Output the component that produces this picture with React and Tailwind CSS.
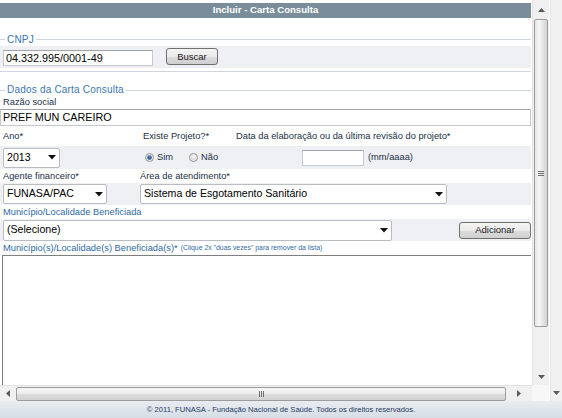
import React from 'react';

const labelCls = "text-[9.3px] leading-[14px] text-[#1c2f45] whitespace-nowrap";
const blueLabel = "text-[9.3px] leading-[14px] text-[#2f6aa6] whitespace-nowrap";

const Caret = () => (
  <svg width="8" height="5" viewBox="0 0 8 5">
    <polygon points="0,0 8,0 4,4.5" fill="#111" />
  </svg>
);

const Arrow = ({ dir }) => {
  const pts = {
    up: "0,4 7,4 3.5,0",
    down: "0,0 7,0 3.5,4",
    left: "4,0 4,7 0,3.5",
    right: "0,0 0,7 4,3.5",
  }[dir];
  const vertical = dir === 'up' || dir === 'down';
  return (
    <svg width={vertical ? 7 : 4} height={vertical ? 4 : 7} viewBox={vertical ? "0 0 7 4" : "0 0 4 7"}>
      <polygon points={pts} fill="#5a5a5a" />
    </svg>
  );
};

const Select = ({ value, className }) => (
  <div className={`flex items-center justify-between border border-[#b9bcc1] rounded-[2px] bg-white pl-[3px] pr-[3px] text-[10.6px] text-black ${className}`}>
    <span className="whitespace-nowrap">{value}</span>
    <Caret />
  </div>
);

const Button = ({ children, className }) => (
  <button className={`border border-[#707070] rounded-[3px] bg-[linear-gradient(#f4f4f4_0%,#ebebeb_50%,#dddddd_50%,#cfcfcf_100%)] text-[9.5px] text-[#1a1a1a] leading-none ${className}`}>
    {children}
  </button>
);

const Legend = ({ children, className }) => (
  <div className={`flex items-center ${className}`}>
    <div className="w-[5px] h-px bg-[#cfd6de]" />
    <span className="px-[2px] text-[10px] leading-[10px] text-[#3b76b0] tracking-[0.2px]">{children}</span>
    <div className="flex-1 h-px bg-[#cfd6de]" />
  </div>
);

const Radio = ({ checked }) => (
  <svg width="9" height="9" viewBox="0 0 9 9">
    <defs>
      <radialGradient id={checked ? 'rc' : 'ru'} cx="50%" cy="40%" r="60%">
        <stop offset="0%" stopColor={checked ? '#5b8fcf' : '#ffffff'} />
        <stop offset="100%" stopColor={checked ? '#163c6e' : '#d6d6d6'} />
      </radialGradient>
    </defs>
    <circle cx="4.5" cy="4.5" r="4" fill="#f3f3f3" stroke="#8e8f8f" strokeWidth="1" />
    {checked ? (
      <circle cx="4.5" cy="4.5" r="2.3" fill="url(#rc)" />
    ) : (
      <circle cx="4.5" cy="4.5" r="2.8" fill="url(#ru)" />
    )}
  </svg>
);

const Content = () => (
  <div className="w-[531px] h-[385px] flex flex-col pt-[3px] overflow-hidden">
    <div className="h-[15px] bg-[#798e9a] text-white font-bold text-[9.6px] flex items-center justify-center">
      Incluir - Carta Consulta
    </div>

    <Legend className="mt-[16px] h-[11px]">CNPJ</Legend>
    <div className="mt-[1px] h-[22px] bg-[#eef0f4] flex items-center">
      <div className="ml-[3px] w-[150px] h-[16px] mt-[2px] bg-white border border-[#c5c9cf] border-t-[#a0a4aa] text-[10.8px] leading-[14px] pl-[2px] text-black">
        04.332.995/0001-49
      </div>
      <Button className="ml-[13px] w-[52px] h-[17px] -mt-[1px]">Buscar</Button>
    </div>
    <div className="mt-[3px] h-px bg-[#cfd6de]" />

    <Legend className="mt-[13px] h-[10px]">Dados da Carta Consulta</Legend>
    <div className={`${labelCls} h-[13px] leading-[13px] pl-[3px]`}>Razão social</div>
    <div className="mt-[1px] h-[17px] bg-white border border-[#c5c9cf] border-t-[#a0a4aa] text-[10.8px] leading-[15px] pl-[2px] text-black">
      PREF MUN CAREIRO
    </div>

    <div className="mt-[3px] h-[14px] flex">
      <div className={`${labelCls} w-[142px] pl-[3px]`}>Ano*</div>
      <div className={`${labelCls} w-[94px] pl-[1px]`}>Existe Projeto?*</div>
      <div className={labelCls}>Data da elaboração ou da última revisão do projeto*</div>
    </div>
    <div className="mt-[3px] h-[23px] bg-[#eef0f4] flex items-center">
      <div className="w-[142px] pl-[3px]">
        <Select value="2013" className="w-[57px] h-[20px]" />
      </div>
      <div className="w-[94px] pl-[3px] flex items-center text-[9.3px] text-[#1c2f45]">
        <Radio checked />
        <span className="ml-[3px]">Sim</span>
        <span className="ml-[16px]"><Radio /></span>
        <span className="ml-[3px]">Não</span>
      </div>
      <div className="ml-[66px] w-[62px] h-[16px] bg-white border border-[#c5c9cf] border-t-[#a0a4aa]" />
      <span className="ml-[4px] text-[9.3px] text-[#1c2f45]">(mm/aaaa)</span>
    </div>

    <div className="h-[14px] flex">
      <div className={`${labelCls} w-[140px] pl-[3px]`}>Agente financeiro*</div>
      <div className={labelCls}>Área de atendimento*</div>
    </div>
    <div className="h-[22px] bg-[#eef0f4] flex items-center">
      <div className="w-[140px] pl-[3px]">
        <Select value="FUNASA/PAC" className="w-[104px] h-[20px]" />
      </div>
      <Select value="Sistema de Esgotamento Sanitário" className="w-[307px] h-[20px]" />
    </div>

    <div className={`${blueLabel} h-[14px] pl-[3px]`}>Município/Localidade Beneficiada</div>
    <div className="h-[22px] bg-[#eef0f4] flex items-center">
      <div className="pl-[3px]">
        <Select value="(Selecione)" className="w-[389px] h-[21px]" />
      </div>
      <Button className="ml-auto w-[72px] h-[17px]">Adicionar</Button>
    </div>

    <div className="h-[14px] flex items-center pl-[3px]">
      <span className={blueLabel}>Município(s)/Localidade(s) Beneficiada(s)*</span>
      <span className="ml-[3px] text-[6.9px] text-[#2f6aa6] whitespace-nowrap">(Clique 2x "duas vezes" para remover da lista)</span>
    </div>
    <div className="ml-[2px] flex-1 bg-white border-t border-l border-[#7f7f7f]" />
  </div>
);

const VScroll = () => (
  <div className="w-[17px] bg-[#f0f0f0] border-l border-[#e2e2e2] flex flex-col items-center">
    <div className="h-[19px] flex items-center justify-center">
      <Arrow dir="up" />
    </div>
    <div className="w-[14px] h-[308px] rounded-[2px] border border-[#9c9c9c] bg-[linear-gradient(to_right,#e6e6e6,#f7f7f7_35%,#e2e2e2_70%,#d4d4d4)] flex flex-col items-center justify-center gap-[1px]">
      <div className="w-[6px] h-px bg-[#707070]" />
      <div className="w-[6px] h-px bg-[#707070]" />
      <div className="w-[6px] h-px bg-[#707070]" />
    </div>
    <div className="flex-1" />
    <div className="h-[17px] flex items-center justify-center">
      <Arrow dir="down" />
    </div>
  </div>
);

const HScroll = () => (
  <div className="w-[532px] h-[16px] bg-[#f0f0f0] border-t border-[#e2e2e2] flex items-center">
    <div className="w-[16px] flex items-center justify-center">
      <Arrow dir="left" />
    </div>
    <div className="w-[490px] h-[14px] rounded-[2px] border border-[#9c9c9c] bg-[linear-gradient(#f6f6f6,#ececec_45%,#dcdcdc_55%,#d2d2d2)] flex items-center justify-center gap-[1px]">
      <div className="w-px h-[6px] bg-[#707070]" />
      <div className="w-px h-[6px] bg-[#707070]" />
      <div className="w-px h-[6px] bg-[#707070]" />
    </div>
    <div className="flex-1 flex items-center justify-center">
      <Arrow dir="right" />
    </div>
  </div>
);

export default function App() {
  return (
    <div className="w-[562px] h-[418px] bg-white flex flex-col overflow-hidden font-['Liberation_Sans',Arial,sans-serif]">
      <div className="flex h-[401px]">
        <div className="w-[549px] flex flex-col">
          <div className="flex h-[385px]">
            <Content />
            <div className="w-px" />
            <VScroll />
          </div>
          <div className="flex h-[16px]">
            <HScroll />
            <div className="w-[17px] bg-[#f7f7f7]" />
          </div>
        </div>
        <div className="w-px bg-white" />
        <div className="w-[12px] bg-[#f0f0f0] border-l border-[#e6e6e6] flex flex-col items-center justify-end pb-[6px]">
          <Arrow dir="down" />
        </div>
      </div>
      <div className="h-[17px] bg-[linear-gradient(#e9edf2,#d6dde5)] flex items-center justify-center text-[7.6px] text-[#1e3a64] whitespace-nowrap">
        © 2011, FUNASA - Fundação Nacional de Saúde. Todos os direitos reservados.
      </div>
    </div>
  );
}
